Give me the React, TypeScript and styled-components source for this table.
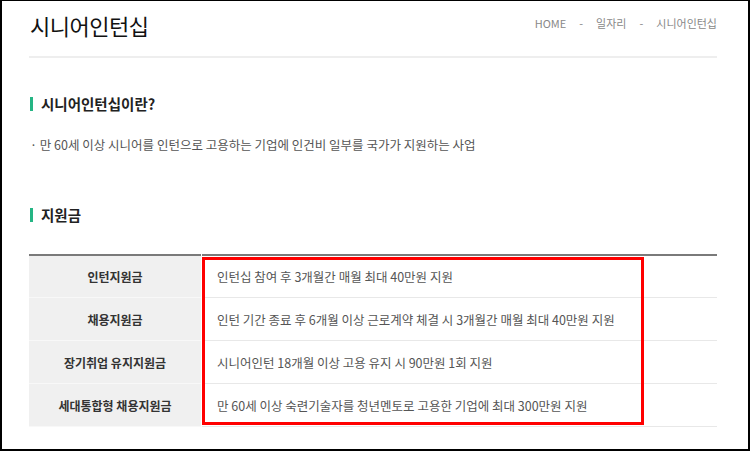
import React from "react";
import styled, { createGlobalStyle } from "styled-components";

const Global = createGlobalStyle`
  html, body { margin: 0; padding: 0; background: #fff; }
  body { font-family: "Noto Sans CJK KR", "Noto Sans", sans-serif; }
  * { box-sizing: border-box; }
`;

const Frame = styled.div`
  width: 750px;
  height: 451px;
  border: 2px solid #000;
  border-top-width: 1px;
  overflow: hidden;
  background: #fff;
`;

const Content = styled.div`
  margin: 0 31px 0 27px;
`;

const Header = styled.header`
  display: flex;
  justify-content: space-between;
  align-items: center;
  height: 57px;
  padding-bottom: 8px;
  border-bottom: 2px solid #eeeeee;
`;

const PageTitle = styled.h1`
  margin: 0 0 0 1px;
  font-size: 22px;
  font-weight: 400;
  color: #111;
  letter-spacing: -0.5px;
`;

const Crumbs = styled.nav`
  display: flex;
  gap: 13px;
  font-size: 11px;
  color: #888;
  margin-top: -4px;
`;

const Section = styled.section<{ $top: number }>`
  margin-top: ${(p) => p.$top}px;
`;

const Heading = styled.h2`
  display: flex;
  align-items: center;
  gap: 8px;
  margin: 0;
  font-size: 14.5px;
  font-weight: 700;
  color: #222;
  line-height: 20px;
  &::before {
    content: "";
    width: 3px;
    height: 14px;
    background: #25b584;
    margin-left: 1px;
  }
`;

const Bullet = styled.p`
  margin: 22px 0 0 1px;
  font-size: 12.5px;
  color: #555;
  line-height: 18px;
`;

const TableWrap = styled.div`
  position: relative;
  margin-top: 29px;
`;

const Table = styled.div`
  display: grid;
  grid-template-columns: 172px 1fr;
  column-gap: 1px;
`;

const HeadCell = styled.div<{ $first?: boolean }>`
  display: flex;
  align-items: center;
  justify-content: center;
  background: #f0f0f0;
  border-bottom: 1px solid #f8f8f8;
  border-top: ${(p) => (p.$first ? "2px solid #7a7a7a" : "none")};
  height: ${(p) => (p.$first ? 44 : 43)}px;
  font-size: 12px;
  font-weight: 700;
  color: #333;
`;

const BodyCell = styled.div<{ $first?: boolean }>`
  display: flex;
  align-items: center;
  padding-left: 15px;
  border-bottom: 1px solid #e8e8e8;
  border-top: ${(p) => (p.$first ? "2px solid #7a7a7a" : "none")};
  height: ${(p) => (p.$first ? 44 : 43)}px;
  font-size: 12.5px;
  color: #555;
`;

const Highlight = styled.div`
  position: absolute;
  left: 173px;
  top: 3px;
  width: 442px;
  height: 168px;
  border: 3px solid #ff0000;
  pointer-events: none;
`;

const rows = [
  ["인턴지원금", "인턴십 참여 후 3개월간 매월 최대 40만원 지원"],
  ["채용지원금", "인턴 기간 종료 후 6개월 이상 근로계약 체결 시 3개월간 매월 최대 40만원 지원"],
  ["장기취업 유지지원금", "시니어인턴 18개월 이상 고용 유지 시 90만원 1회 지원"],
  ["세대통합형 채용지원금", "만 60세 이상 숙련기술자를 청년멘토로 고용한 기업에 최대 300만원 지원"],
];

export default function App() {
  return (
    <Frame>
      <Global />
      <Content>
        <Header>
          <PageTitle>시니어인턴십</PageTitle>
          <Crumbs>
            <span>HOME</span>
            <span>-</span>
            <span>일자리</span>
            <span>-</span>
            <span>시니어인턴십</span>
          </Crumbs>
        </Header>
        <Section $top={36}>
          <Heading>시니어인턴십이란?</Heading>
          <Bullet>· 만 60세 이상 시니어를 인턴으로 고용하는 기업에 인건비 일부를 국가가 지원하는 사업</Bullet>
        </Section>
        <Section $top={51}>
          <Heading>지원금</Heading>
          <TableWrap>
            <Table>
              {rows.map(([h, b], i) => (
                <React.Fragment key={h}>
                  <HeadCell $first={i === 0}>{h}</HeadCell>
                  <BodyCell $first={i === 0}>{b}</BodyCell>
                </React.Fragment>
              ))}
            </Table>
            <Highlight />
          </TableWrap>
        </Section>
      </Content>
    </Frame>
  );
}
